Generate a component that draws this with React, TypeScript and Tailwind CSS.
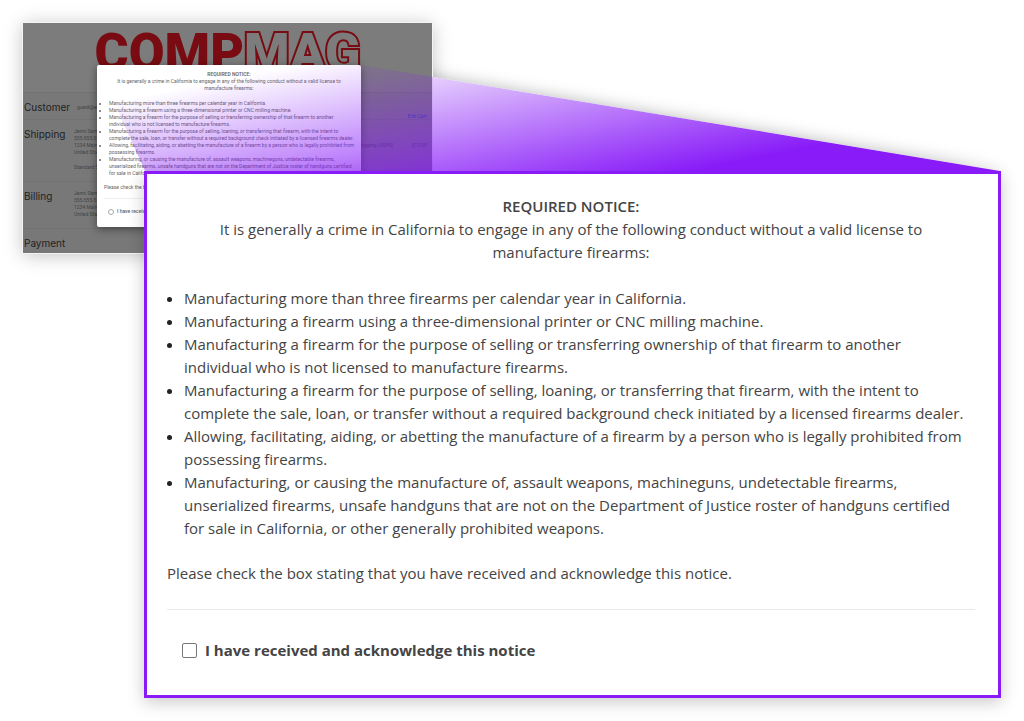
import React from "react";

const intro = [
  "It is generally a crime in California to engage in any of the following conduct without a valid license to",
  "manufacture firearms:",
];

const items: string[][] = [
  ["Manufacturing more than three firearms per calendar year in California."],
  ["Manufacturing a firearm using a three-dimensional printer or CNC milling machine."],
  [
    "Manufacturing a firearm for the purpose of selling or transferring ownership of that firearm to another",
    "individual who is not licensed to manufacture firearms.",
  ],
  [
    "Manufacturing a firearm for the purpose of selling, loaning, or transferring that firearm, with the intent to",
    "complete the sale, loan, or transfer without a required background check initiated by a licensed firearms dealer.",
  ],
  [
    "Allowing, facilitating, aiding, or abetting the manufacture of a firearm by a person who is legally prohibited from",
    "possessing firearms.",
  ],
  [
    "Manufacturing, or causing the manufacture of, assault weapons, machineguns, undetectable firearms,",
    "unserialized firearms, unsafe handguns that are not on the Department of Justice roster of handguns certified",
    "for sale in California, or other generally prohibited weapons.",
  ],
];

function Lines({ lines }: { lines: string[] }) {
  return (
    <>
      {lines.map((line) => (
        <span key={line} className="block whitespace-nowrap">
          {line}
        </span>
      ))}
    </>
  );
}

function NoticeHeading() {
  return (
    <div className="text-center">
      <h2 className="font-semibold">REQUIRED NOTICE:</h2>
      <p>
        <Lines lines={intro} />
      </p>
    </div>
  );
}

function MiniModal() {
  return (
    <div className="absolute left-[74px] top-[42px] h-[162px] w-[264px] overflow-hidden rounded-[2px] bg-white px-[7px] pt-[6px] font-['Roboto'] text-[5px] leading-[7px] text-[#666] shadow-[0_2px_8px_rgba(0,0,0,0.45)]">
      <NoticeHeading />
      <ul className="mt-[8px] list-disc pl-[5px]">
        {items.map((lines) => (
          <li key={lines[0]}>
            <Lines lines={lines} />
          </li>
        ))}
      </ul>
      <p className="mt-[7px]">Please check the box stating that you have received and acknowledge this notice.</p>
      <hr className="mt-[7px] border-[#eee]" />
      <label className="mt-[9px] flex items-center gap-[3px] pl-[4px] font-medium">
        <input type="radio" name="mini-ack" className="size-[6px] appearance-none rounded-full border border-[#aaa]" />
        I have received and acknowledge this notice
      </label>
    </div>
  );
}

function StepRow({
  title,
  className,
  children,
}: {
  title: string;
  className: string;
  children?: React.ReactNode;
}) {
  return (
    <section className={"flex border-t border-[#727272] pl-px " + className}>
      <h3 className="w-[50px] shrink-0 font-['Inter'] text-[10px] leading-[12px] text-[#222]">{title}</h3>
      {children}
    </section>
  );
}

function Checkout() {
  return (
    <div className="absolute left-[23px] top-[23px] h-[230px] w-[409px] bg-[#7c7c7c] font-['Roboto'] text-[5px] leading-[7px] text-[#444] shadow-[0_2px_18px_rgba(0,0,0,0.25)] outline outline-[#f4f4f4]">
      <header className="flex h-[69px] justify-center pt-[7px] font-['Roboto'] text-[52px] font-black leading-[46px] text-[#780c12]">
        <span>COMP</span>
        <span className="text-[#7c7c7c] [-webkit-text-stroke:4px_#780c12] [paint-order:stroke_fill]">MAG</span>
      </header>
      <div className="bg-[#787878]">
        <StepRow title="Customer" className="h-[27px] pt-[8px]">
          <p className="pl-[3px] pt-[3px]">guest@email.com</p>
          <a href="#cart" className="ml-auto pr-[5px] pt-[12px] text-[#2f45a0]">
            Edit Cart
          </a>
        </StepRow>
        <StepRow title="Shipping" className="h-[62px] pt-[8px]">
          <div>
            <Lines lines={["Jenni Sample", "555-555-5555", "1234 Main Street", "United States"]} />
            <p className="pt-[8px]">Standard Shipping</p>
          </div>
          <p className="ml-auto pt-[14px]">Shipping (USPS)</p>
          <p className="pl-[18px] pr-[5px] pt-[14px]">$12.00</p>
        </StepRow>
        <StepRow title="Billing" className="h-[47px] pt-[8px]">
          <div>
            <Lines lines={["Jenni Sample", "555-555-5555", "1234 Main Street", "United States"]} />
          </div>
        </StepRow>
        <StepRow title="Payment" className="h-[25px] pt-[8px]" />
      </div>
      <MiniModal />
    </div>
  );
}

const beamBox = "absolute left-[97px] right-[24px] top-[65px] h-[106px] w-[calc(100%-121px)]";

function BeamShadow() {
  return (
    <svg
      className={beamBox + " overflow-visible drop-shadow-[0_0_8px_rgba(0,0,0,0.28)]"}
      viewBox="97 65 903 106"
      preserveAspectRatio="none"
      aria-hidden="true"
    >
      <path d="M361 65L1000 171H361Z" fill="#fff" />
    </svg>
  );
}

function Beam() {
  return (
    <svg className={beamBox} viewBox="97 65 903 106" preserveAspectRatio="none" aria-hidden="true">
      <defs>
        <linearGradient id="beam" gradientUnits="userSpaceOnUse" x1="200" y1="84" x2="236" y2="263">
          <stop offset="0" stopColor="#881bf8" stopOpacity="0" />
          <stop offset="1" stopColor="#881bf8" />
        </linearGradient>
        <clipPath id="beyond-checkout">
          <path d="M433 65H1000V171H433Z" />
        </clipPath>
      </defs>
      <path d="M361 65L1000 171H361Z" fill="#fff" clipPath="url(#beyond-checkout)" />
      <path d="M97 65H361L1000 171H145Z" fill="url(#beam)" />
    </svg>
  );
}

export default function App() {
  return (
    <main className="relative bg-white pb-[23px] pl-[144px] pr-[23px] pt-[171px] font-['Open_Sans',sans-serif] text-[#444]">
      <BeamShadow />
      <Checkout />
      <article className="relative border-[3px] border-[#881bf8] bg-white pb-[33px] pl-5 pr-[23px] pt-[21px] text-[15px] leading-[23px] shadow-[0_4px_16px_rgba(0,0,0,0.22)]">
        <NoticeHeading />
        <ul className="mt-[23px] list-disc pl-[17px] marker:text-[#222]">
          {items.map((lines) => (
            <li key={lines[0]}>
              <Lines lines={lines} />
            </li>
          ))}
        </ul>
        <p className="mt-[22px]">Please check the box stating that you have received and acknowledge this notice.</p>
        <hr className="mt-[24px] border-[#e8e8ee]" />
        <label className="mt-[29px] flex items-center gap-2 pl-[15px] font-bold">
          <input
            type="checkbox"
            className="size-[15px] appearance-none rounded-[2px] border border-[#777] bg-white checked:bg-[#881bf8]"
          />
          I have received and acknowledge this notice
        </label>
      </article>
      <Beam />
    </main>
  );
}
